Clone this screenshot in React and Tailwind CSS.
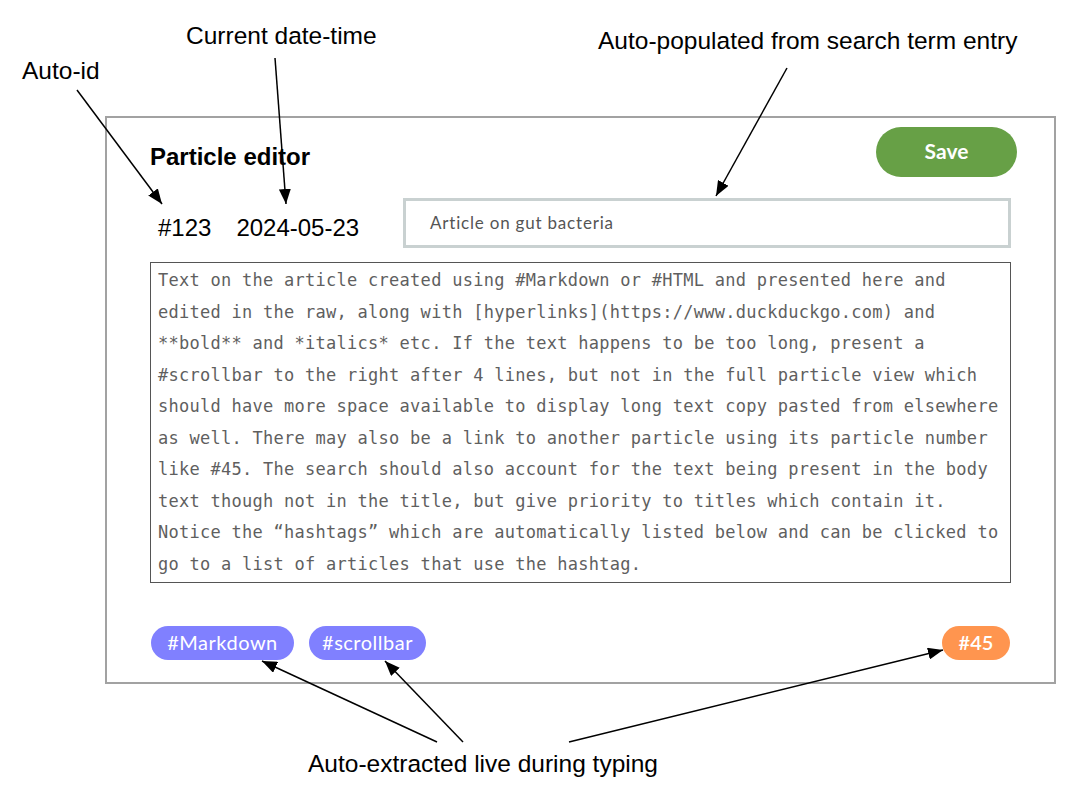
import React from "react";

const lines = [
  "Text on the article created using #Markdown or #HTML and presented here and",
  "edited in the raw, along with [hyperlinks](https://www.duckduckgo.com) and",
  "**bold** and *italics* etc. If the text happens to be too long, present a",
  "#scrollbar to the right after 4 lines, but not in the full particle view which",
  "should have more space available to display long text copy pasted from elsewhere",
  "as well. There may also be a link to another particle using its particle number",
  "like #45. The search should also account for the text being present in the body",
  "text though not in the title, but give priority to titles which contain it.",
  "Notice the \u201chashtags\u201d which are automatically listed below and can be clicked to",
  "go to a list of articles that use the hashtag.",
];

const arrows = [
  [77, 90, 162, 204],
  [275, 58, 286, 204],
  [787, 68, 716, 196],
  [437, 742, 262, 661],
  [463, 742, 385, 661],
  [569, 742, 943, 650],
];

export default function App() {
  return (
    <div className="relative w-[1072px] h-[801px] bg-white overflow-hidden" style={{ fontFamily: '"Liberation Sans", Arial, sans-serif' }}>
      <div className="pt-[116px] pl-[105px]">
        <div className="w-[951px] h-[568px] border-2 border-[#a2a2a2] pt-[9px] pl-[43px] pr-[43px] flex flex-col">
          <div className="flex justify-between items-start">
            <div className="mt-[18px] text-[24px] leading-[24px] font-bold text-black">Particle editor</div>
            <button className="-mr-[6px] w-[141px] h-[50px] pb-[3px] rounded-full bg-[#67a046] text-white text-[21px] font-bold flex items-center justify-center" style={{ fontFamily: 'Lato, "Open Sans", sans-serif' }}>
              Save
            </button>
          </div>
          <div className="mt-[21px] flex items-start">
            <div className="w-[253px] pl-[8px] mt-[18px] text-[24px] leading-[24px] text-black flex gap-[25px] whitespace-nowrap">
              <span>#123</span>
              <span>2024-05-23</span>
            </div>
            <div className="flex-1 h-[50px] border-[3px] border-[#c9d1d1] pl-[24px] flex items-center text-[17px] tracking-[0.8px] text-[#555]" style={{ fontFamily: 'Lato, "Open Sans", sans-serif' }}>
              Article on gut bacteria
            </div>
          </div>
          <div className="mt-[14px] h-[321px] border border-[#555] px-[7px] pt-[2px] text-[17px] leading-[31.5px] tracking-[0.27px] text-[#5f5f5f] whitespace-pre" style={{ fontFamily: '"DejaVu Sans Mono", "Liberation Mono", monospace' }}>
            {lines.map((l, i) => (
              <div key={i}>{l}</div>
            ))}
          </div>
          <div className="mt-[43px] flex items-center text-white text-[20px]" style={{ fontFamily: 'Lato, "Open Sans", sans-serif' }}>
            <span className="ml-[1px] w-[143px] h-[34px] pb-[3px] rounded-full bg-[#8080ff] flex items-center justify-center tracking-[0.5px]">#Markdown</span>
            <span className="ml-[15px] w-[117px] h-[34px] pb-[3px] rounded-full bg-[#8080ff] flex items-center justify-center tracking-[0.5px]">#scrollbar</span>
            <span className="ml-auto mr-[1px] w-[68px] h-[34px] pb-[3px] rounded-full bg-[#ff954f] flex items-center justify-center font-semibold">#45</span>
          </div>
        </div>
      </div>

      <div className="absolute left-[22px] top-[59px] text-[24.5px] leading-[24.5px] text-black whitespace-nowrap">Auto-id</div>
      <div className="absolute left-[186px] top-[24px] text-[24.5px] leading-[24.5px] text-black whitespace-nowrap">Current date-time</div>
      <div className="absolute left-[598px] top-[29px] text-[24.5px] leading-[24.5px] text-black whitespace-nowrap">Auto-populated from search term entry</div>
      <div className="absolute left-[308px] top-[752px] text-[24.5px] leading-[24.5px] text-black whitespace-nowrap">Auto-extracted live during typing</div>

      <svg className="absolute left-0 top-0 pointer-events-none" width="1072" height="801" viewBox="0 0 1072 801">
        <defs>
          <marker id="ah" markerUnits="userSpaceOnUse" markerWidth="16" markerHeight="12" refX="15" refY="6" orient="auto">
            <path d="M0,0 L15,6 L0,12 z" fill="#000" />
          </marker>
        </defs>
        {arrows.map(([x1, y1, x2, y2], i) => (
          <line key={i} x1={x1} y1={y1} x2={x2} y2={y2} stroke="#000" strokeWidth="1.5" markerEnd="url(#ah)" />
        ))}
      </svg>
    </div>
  );
}
